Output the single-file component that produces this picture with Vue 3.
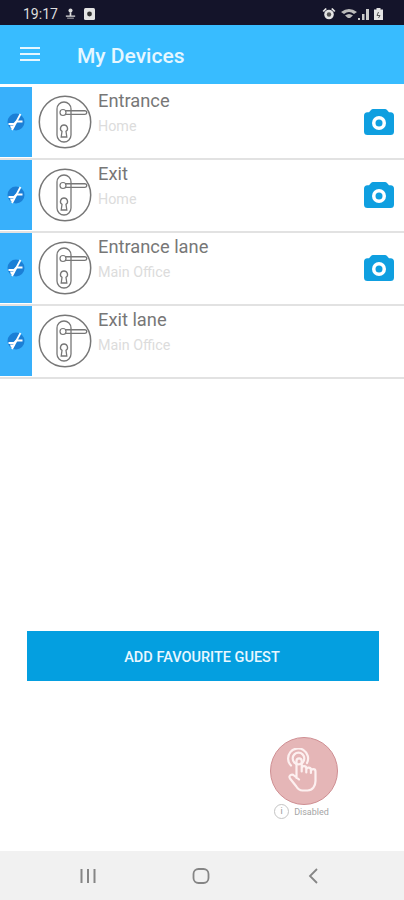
<script setup>
const devices = [
  { name: 'Entrance', place: 'Home', camera: true },
  { name: 'Exit', place: 'Home', camera: true },
  { name: 'Entrance lane', place: 'Main Office', camera: true },
  { name: 'Exit lane', place: 'Main Office', camera: false },
]
</script>

<template>
  <div class="screen">
    <div class="status">
      <div class="status-left">
        <span class="time">19:17</span>
        <svg width="11" height="13" viewBox="0 0 13 13"><circle cx="6.5" cy="3" r="2.4" fill="#ddd"/><path d="M5.5 5h2v4h-2zM1 9h11v1.400H1zM2.500 11.400h8v1h-8z" fill="#ddd"/></svg>
        <svg width="11" height="12" viewBox="0 0 11 12"><rect width="11" height="12" rx="1.500" fill="#e4e4e4"/><circle cx="5.500" cy="6" r="2.400" fill="#333"/></svg>
      </div>
      <div class="status-right">
        <svg width="14" height="12" viewBox="0 0 13 12"><circle cx="6.500" cy="6.500" r="4.800" fill="#e4e4e4"/><circle cx="6.500" cy="6.500" r="2.200" fill="#555"/><path d="M0 3l3-3 1.400 1-3 3zM13 3l-3-3-1.400 1 3 3z" fill="#e4e4e4"/></svg>
        <svg class="wifi" width="16" height="12" viewBox="0 0 16 12"><path d="M0 4Q8-2 16 4l-3 2Q8 2 3 6zM4 7.500Q8 4.500 12 7.500L9 10H7z" fill="#bbb"/></svg>
        <svg width="11" height="12" viewBox="0 0 11 12"><path d="M0 10h2v2H0zM4 6h2.500v6H4zM8 1h3v11H8z" fill="#ccc"/></svg>
        <svg class="battery" width="9" height="12" viewBox="0 0 9 12"><path d="M2.500 0h4v1.500H9V12H0V1.500h2.500z" fill="#e4e4e4"/><path d="M4.500 4 3 7.500h3L4.500 10" stroke="#555" fill="none"/></svg>
      </div>
    </div>

    <header class="appbar">
      <div class="burger"><span></span><span></span><span></span></div>
      <h1 class="title">My Devices</h1>
    </header>

    <ul class="list">
      <li v-for="d in devices" :key="d.name" class="row">
        <div class="strip">
          <svg width="18" height="18" viewBox="0 0 18 18">
            <circle cx="9" cy="9" r="8.500" fill="#1b7fd6"/>
            <path d="M1.500 11h5.500l2.500-2.500h6" stroke="#fff" stroke-width="1.800" fill="none"/>
            <path d="M3 12.500h5l-1.500 3H4z" fill="#fff"/>
            <path d="M13.500 1 5 17" stroke="#fff" stroke-width="1.800" fill="none"/>
          </svg>
        </div>
        <svg class="lock" width="54" height="54" viewBox="0 0 54 54" fill="none" stroke="#777">
          <circle cx="27" cy="27" r="25.700" stroke-width="1.500"/>
          <rect x="19" y="7" width="14" height="40" rx="7" stroke-width="1.300"/>
          <circle cx="25" cy="17.500" r="3" stroke-width="1.200"/>
          <path d="M27 15.800h20a1.800 1.800 0 0 1 0 3.600H27.500" stroke-width="1.400"/>
          <path d="M26 30a3.500 3.500 0 0 1 2 6.400l.8 5.600h-5.600l.8-5.600A3.500 3.500 0 0 1 26 30z" stroke-width="1.300"/>
        </svg>
        <div class="text">
          <div class="name">{{ d.name }}</div>
          <div class="place">{{ d.place }}</div>
        </div>
        <svg v-if="d.camera" class="camera" width="30" height="26" viewBox="0 0 30 26">
          <path d="M5 3.200 7 1a3 3 0 0 1 2-1h12a3 3 0 0 1 2 1l2 2.200h1.500A3.500 3.500 0 0 1 30 6.700V22.500a3.500 3.500 0 0 1-3.500 3.500h-23A3.500 3.500 0 0 1 0 22.500V6.700A3.500 3.500 0 0 1 3.500 3.200z" fill="#0f9fe0"/>
          <circle cx="15" cy="14" r="7" fill="#fff"/>
          <circle cx="15" cy="14" r="3.500" fill="#0f9fe0"/>
        </svg>
      </li>
    </ul>

    <div class="spacer"></div>

    <button class="add">ADD FAVOURITE GUEST</button>

    <div class="touch-wrap">
      <div class="touch">
        <div class="fab">
          <svg width="40" height="46" viewBox="0 0 40 46" fill="none" stroke="#fdf0f0" stroke-width="2.200" stroke-linecap="round" stroke-linejoin="round">
            <circle cx="14.500" cy="10.500" r="5.800"/>
            <path d="M7 17.500A10 10 0 1 1 23 15"/>
            <path d="M12.500 30V13a2.600 2.600 0 0 1 5.200 0v10.500M17.700 20.500a2.300 2.300 0 0 1 4.600 0v4M22.300 22a2.300 2.300 0 0 1 4.600 0v3M26.900 23.500a2.300 2.300 0 0 1 4.600 0V33c0 5-3 9.500-8 9.500h-5c-3 0-5-2-6.500-4.500l-6-7.500c-2-3 2-5 4-3l5 4"/>
          </svg>
        </div>
        <div class="state">
          <span class="info">i</span>
          <span class="state-label">Disabled</span>
        </div>
      </div>
    </div>

    <nav class="navbar">
      <svg width="18" height="16" viewBox="0 0 18 16"><path d="M2.500 1v14M9 1v14M15.500 1v14" stroke="#858585" stroke-width="2"/></svg>
      <svg width="18" height="16" viewBox="0 0 18 16"><rect x="1.500" y="1" width="15" height="14" rx="5" stroke="#858585" stroke-width="1.800" fill="none"/></svg>
      <svg width="18" height="16" viewBox="0 0 18 16"><path d="M13 1 6 8l7 7" stroke="#858585" stroke-width="1.800" fill="none"/></svg>
    </nav>
  </div>
</template>

<style>
html, body { margin: 0; background: #fff; }
</style>

<style scoped>
.screen {
  width: 404px;
  height: 900px;
  display: flex;
  flex-direction: column;
  background: #fff;
  font-family: Roboto, "Liberation Sans", sans-serif;
  overflow: hidden;
}
.status {
  height: 25px;
  flex: none;
  background: #14142a;
  display: flex;
  align-items: center;
  justify-content: space-between;
  padding: 2px 21px 0 23px;
  box-sizing: border-box;
}
.status-left, .status-right { display: flex; align-items: center; gap: 8px; }
.status-right { gap: 1px; }
.status-left .time { margin-right: -1px; }
.wifi { margin-left: 4px; }
.battery { margin-left: 4px; }
.time { color: #ddd; font-size: 14px; }
.appbar {
  height: 59px;
  flex: none;
  background: #38bcff;
  display: flex;
  align-items: center;
  padding-left: 20px;
  box-sizing: border-box;
}
.burger { width: 20px; display: flex; flex-direction: column; gap: 4px; margin-right: 37px; margin-top: -1px; }
.burger span { height: 2px; background: #e6f7ff; }
.title { margin: 0 0 -2px; color: #e6f7ff; font-size: 21px; font-weight: 500; }
.list { list-style: none; margin: 0; padding: 3px 0 0; flex: none; }
.row {
  height: 73px;
  box-sizing: border-box;
  padding-bottom: 1px;
  border-bottom: 2px solid #e2e2e2;
  display: flex;
  align-items: center;
}
.strip {
  width: 32px;
  height: 70px;
  flex: none;
  background: #38b0fb;
  display: flex;
  align-items: center;
  justify-content: center;
  padding-right: 1px;
  box-sizing: border-box;
}
.lock { margin-left: 6px; flex: none; }
.text { margin-left: 6px; flex: 1; align-self: flex-start; }
.name { color: #777; font-size: 18.300px; line-height: 24px; margin-top: 2px; }
.place { color: #dcdcdc; font-size: 14.300px; line-height: 18px; margin-top: 4px; }
.camera { margin-right: 10px; flex: none; }
.spacer { flex: 1; }
.add {
  flex: none;
  height: 50px;
  margin: 0 25px 0 27px;
  border: none;
  background: #049fe0;
  color: #e8f7ff;
  font: 500 14.500px Roboto, "Liberation Sans", sans-serif;
  padding: 2px 2px 0 0;
}
.touch-wrap { flex: none; height: 170px; display: flex; justify-content: flex-end; padding: 56px 66px 0 0; box-sizing: border-box; }
.touch { width: 68px; display: flex; flex-direction: column; align-items: center; }
.fab {
  width: 68px;
  height: 68px;
  flex: none;
  box-sizing: border-box;
  border-radius: 50%;
  background: #e5b6b7;
  border: 1px solid #cf8f93;
  display: flex;
  align-items: center;
  justify-content: center;
}
.state { display: flex; align-items: center; gap: 5px; margin-left: -5px; margin-top: -1px; white-space: nowrap; }
.info {
  width: 15px;
  height: 15px;
  box-sizing: border-box;
  border: 1.500px solid #c4c4c4;
  border-radius: 50%;
  color: #999;
  font-size: 9px;
  line-height: 12px;
  text-align: center;
}
.state-label { color: #a5a5a5; font-size: 9px; }
.navbar {
  height: 49px;
  flex: none;
  background: #f1f1f1;
  display: flex;
  align-items: center;
  justify-content: space-between;
  padding: 0 82px 0 79px;
  box-sizing: border-box;
}
</style>
